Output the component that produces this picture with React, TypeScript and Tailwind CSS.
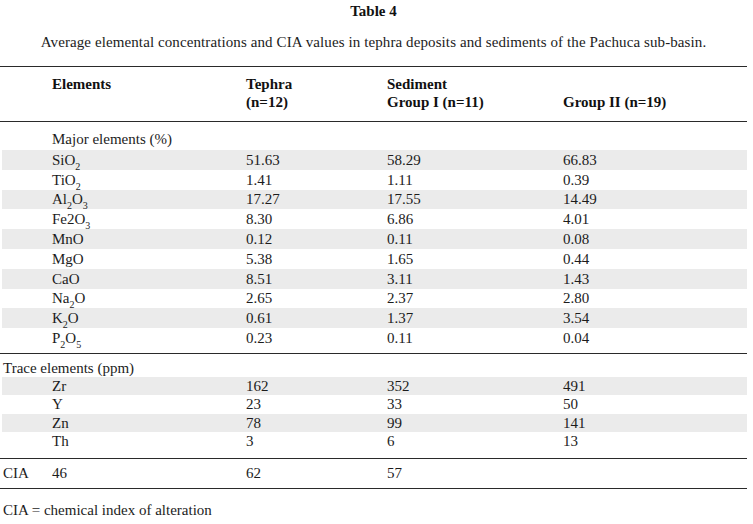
import React from "react";

type Row = { name: React.ReactNode; t: string; s1: string; s2: string };

const Sub = ({ children }: { children: React.ReactNode }) => (
  <sub className="text-[10px] -bottom-[5px]">{children}</sub>
);

const major: Row[] = [
  { name: <>SiO<Sub>2</Sub></>, t: "51.63", s1: "58.29", s2: "66.83" },
  { name: <>TiO<Sub>2</Sub></>, t: "1.41", s1: "1.11", s2: "0.39" },
  { name: <>Al<Sub>2</Sub>O<Sub>3</Sub></>, t: "17.27", s1: "17.55", s2: "14.49" },
  { name: <>Fe2O<Sub>3</Sub></>, t: "8.30", s1: "6.86", s2: "4.01" },
  { name: "MnO", t: "0.12", s1: "0.11", s2: "0.08" },
  { name: "MgO", t: "5.38", s1: "1.65", s2: "0.44" },
  { name: "CaO", t: "8.51", s1: "3.11", s2: "1.43" },
  { name: <>Na<Sub>2</Sub>O</>, t: "2.65", s1: "2.37", s2: "2.80" },
  { name: <>K<Sub>2</Sub>O</>, t: "0.61", s1: "1.37", s2: "3.54" },
  { name: <>P<Sub>2</Sub>O<Sub>5</Sub></>, t: "0.23", s1: "0.11", s2: "0.04" },
];

const trace: Row[] = [
  { name: "Zr", t: "162", s1: "352", s2: "491" },
  { name: "Y", t: "23", s1: "33", s2: "50" },
  { name: "Zn", t: "78", s1: "99", s2: "141" },
  { name: "Th", t: "3", s1: "6", s2: "13" },
];

const cols = "grid grid-cols-[52px_194px_141px_176px_1fr]";

function DataRow({ row, grey, h }: { row: Row; grey: boolean; h: string }) {
  return (
    <div className={`${cols} ${h} items-center ml-[2px] ${grey ? "bg-[#ebebeb]" : ""}`}>
      <div />
      <div className="-ml-[2px] whitespace-nowrap">{row.name}</div>
      <div className="-ml-[2px]">{row.t}</div>
      <div className="-ml-[2px]">{row.s1}</div>
      <div className="-ml-[2px]">{row.s2}</div>
    </div>
  );
}

const Rule = ({ className = "" }: { className?: string }) => (
  <div className={`h-px bg-[#2a2a2a] ${className}`} />
);

export default function App() {
  return (
    <div className="w-[753px] h-[524px] bg-white text-[#1c1c1c] text-[15px] leading-[18px] overflow-hidden font-['Liberation_Serif','Times_New_Roman',serif]">
      <div className="w-[747px]">
        <div className="pt-[2px] text-center font-bold text-[#111]">Table 4</div>
        <div className="mt-[13px] text-center tracking-[0.1px]">
          Average elemental concentrations and CIA values in tephra deposits and sediments of the Pachuca sub-basin.
        </div>
        <Rule className="mt-[15px]" />

        {/* header */}
        <div className={`${cols} pt-[8px] pb-[10px] font-bold text-[#111]`}>
          <div />
          <div>Elements</div>
          <div>
            <div>Tephra</div>
            <div>(n=12)</div>
          </div>
          <div>
            <div>Sediment</div>
            <div>Group I (n=11)</div>
          </div>
          <div>
            <div>&nbsp;</div>
            <div>Group II (n=19)</div>
          </div>
        </div>
        <Rule />

        <div className="pt-[8px] pl-[52px] pb-[2px]">Major elements (%)</div>
        {major.map((r, i) => (
          <DataRow key={i} row={r} grey={i % 2 === 0} h="h-[19.8px]" />
        ))}
        <Rule className="mt-[5px]" />

        <div className="pt-[5px] pl-[3px]">Trace elements (ppm)</div>
        {trace.map((r, i) => (
          <DataRow key={i} row={r} grey={i % 2 === 0} h="h-[18.3px]" />
        ))}
        <Rule className="mt-[8px]" />

        <div className={`${cols} pt-[5px] pb-[6px]`}>
          <div className="pl-[3px]">CIA</div>
          <div>46</div>
          <div>62</div>
          <div>57</div>
          <div />
        </div>
        <Rule />

        <div className="mt-[12px] pl-[3px]">CIA = chemical index of alteration</div>
      </div>
    </div>
  );
}
